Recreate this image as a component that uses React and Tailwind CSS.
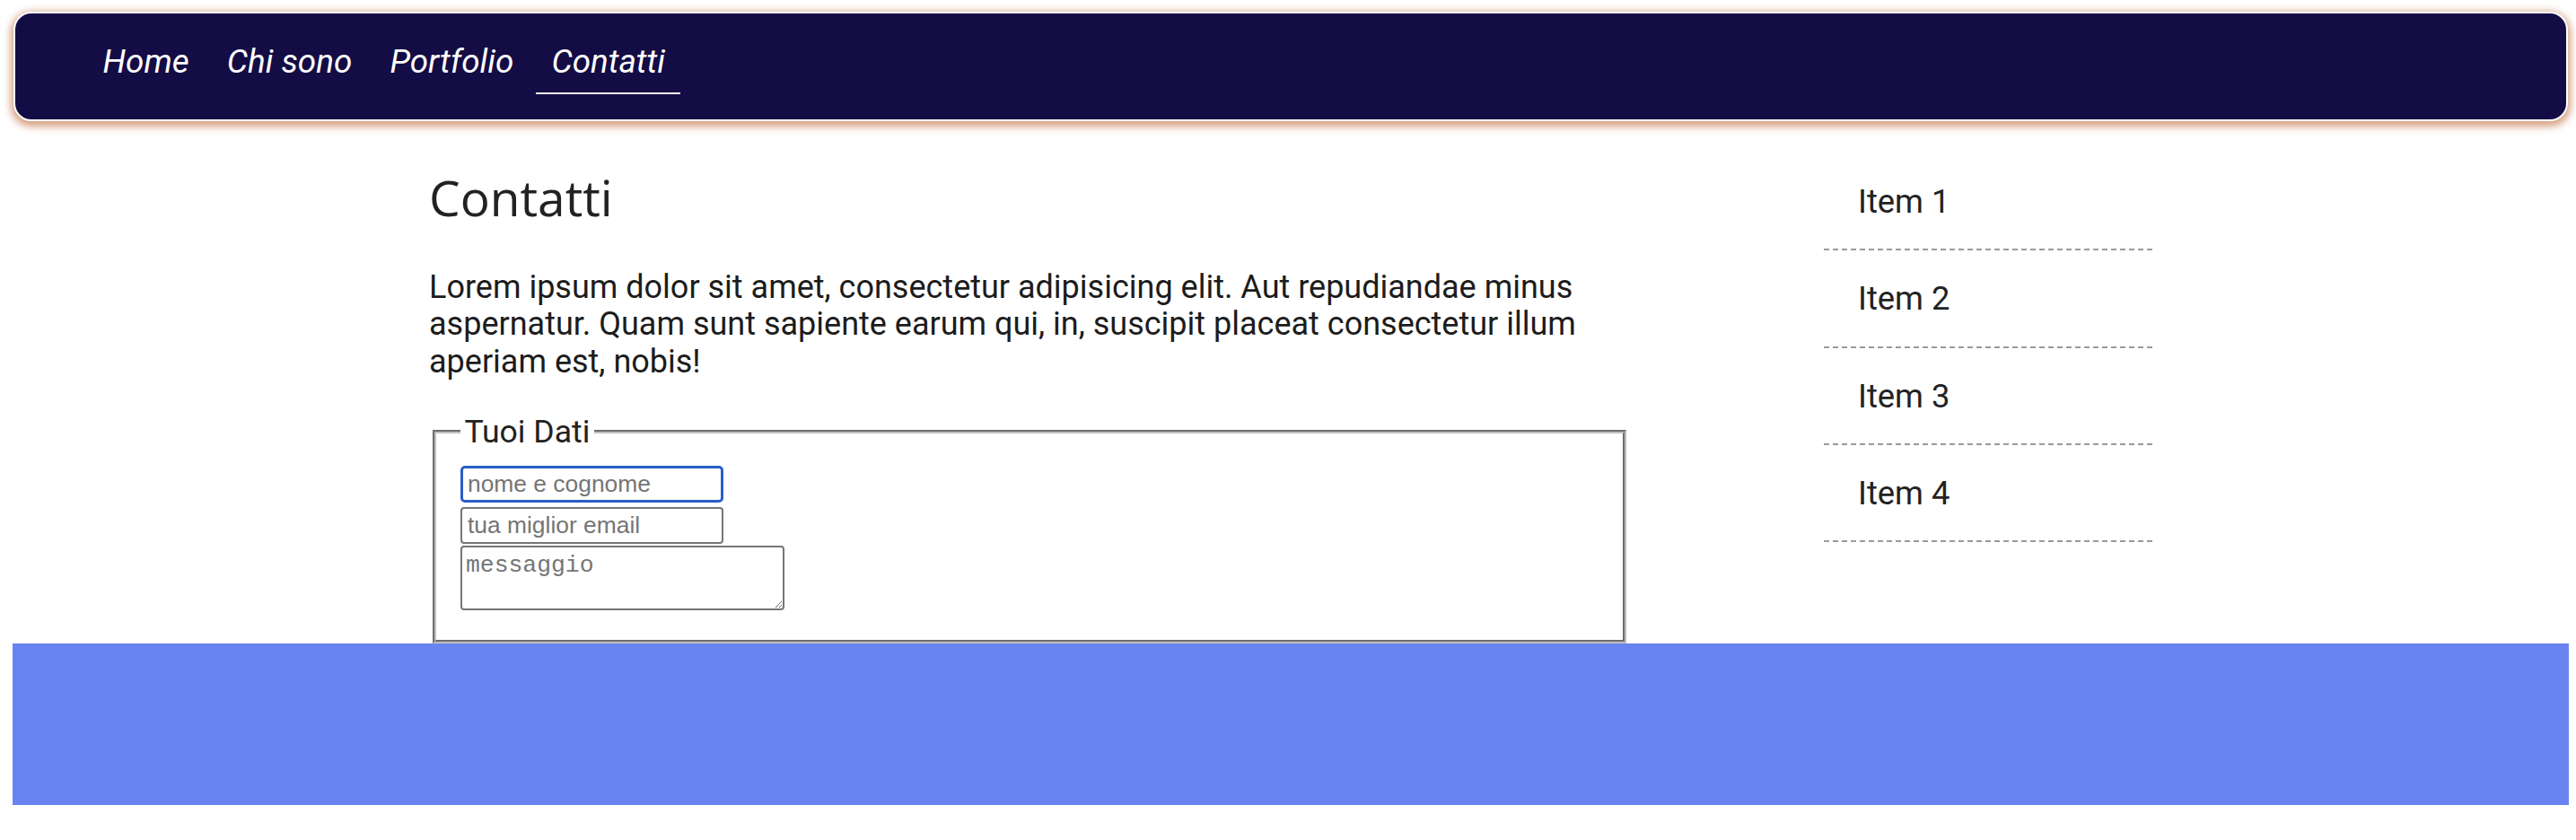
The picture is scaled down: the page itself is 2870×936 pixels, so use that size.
import React from "react";

const links = ["Home", "Chi sono", "Portfolio", "Contatti"];
const items = ["Item 1", "Item 2", "Item 3", "Item 4"];

const Navbar = () => {
  return (
    <nav className="ml-[15px] mr-[9px] mt-[13px] h-[122px] rounded-[20px] border-2 border-white bg-[#140c44] shadow-[0_3px_9px_3px_rgba(200,130,90,0.75)]">
      <ul className="flex gap-[7px] pl-[80px] pt-[33px]">
        {links.map((link) => (
          <li key={link}>
            <a
              href="#"
              className={
                link === "Contatti"
                  ? "block border-b-2 border-white px-[17.6px] pb-[13px] font-['Roboto'] text-[36.8px] italic leading-[42px] text-white"
                  : "block border-b-2 border-transparent px-[17.6px] pb-[13px] font-['Roboto'] text-[36.8px] italic leading-[42px] text-white"
              }
            >
              {link}
            </a>
          </li>
        ))}
      </ul>
    </nav>
  );
};

const ContactForm = () => {
  return (
    <fieldset className="mx-[4px] mt-[31px] pb-[33px] pl-[27px] pr-[27px] pt-[11px] [border:4px_groove_#c0c0c0]">
      <legend className="px-[4.4px] font-['Roboto'] text-[35.6px] text-[#222]">
        Tuoi Dati
      </legend>
      <input
        type="text"
        placeholder="nome e cognome"
        className="block h-[41px] w-[293px] rounded-[5px] border-[3px] border-[#2a5ec8] pl-[5px] font-['Liberation_Sans'] text-[26.4px] outline-none placeholder:text-[#757575]"
      />
      <input
        type="email"
        placeholder="tua miglior email"
        className="mt-[5px] block h-[41px] w-[293px] rounded-[4px] border-2 border-[#767676] pl-[6px] font-['Liberation_Sans'] text-[26.4px] outline-none placeholder:text-[#757575]"
      />
      <textarea
        placeholder="messaggio"
        rows={2}
        className="mt-[2px] block h-[72px] w-[361px] rounded-[4px] border-2 border-[#767676] px-[4px] pt-[5px] font-['Liberation_Mono'] text-[26.4px] leading-[30px] outline-none placeholder:text-[#757575]"
      />
    </fieldset>
  );
};

const Sidebar = () => {
  return (
    <ul className="ml-[216px] mt-[36px] w-[366px] shrink-0">
      {items.map((item) => (
        <li
          key={item}
          className="border-b-2 border-dashed border-[#9a9a9a] pb-[32px] pl-[38px] pt-[33px] font-['Roboto'] text-[36.4px] leading-[41.25px] text-[#222]"
        >
          {item}
        </li>
      ))}
    </ul>
  );
};

export default function App() {
  return (
    <div className="min-h-[936px] bg-white">
      <Navbar />
      <div className="flex pl-[478px]">
        <main className="w-[1338px] shrink-0">
          <h1 className="mt-[47px] font-['Open_Sans'] text-[55px] leading-[75px] text-[#222]">
            Contatti
          </h1>
          <p className="mt-[43px] font-['Roboto'] text-[36px] leading-[41.25px] text-[#1c1c1c]">
            Lorem ipsum dolor sit amet, consectetur adipisicing elit. Aut
            repudiandae minus aspernatur. Quam sunt sapiente earum qui, in,
            suscipit placeat consectetur illum aperiam est, nobis!
          </p>
          <ContactForm />
        </main>
        <Sidebar />
      </div>
      <footer className="ml-[14px] mr-[8px] h-[180px] bg-[#6984f0]"></footer>
    </div>
  );
}
